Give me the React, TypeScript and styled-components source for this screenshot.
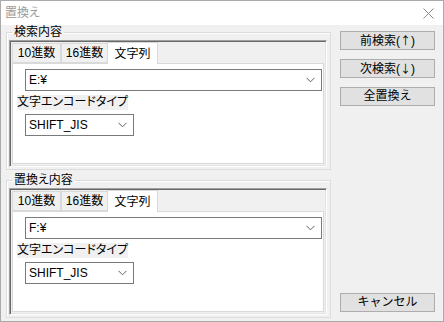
import styled, { createGlobalStyle } from 'styled-components'

const GlobalStyle = createGlobalStyle`
  html, body {
    margin: 0;
    padding: 0;
    background: #ffffff;
  }
  body {
    font-family: "Liberation Sans", "Noto Sans CJK JP", sans-serif;
    font-size: 12px;
    color: #000000;
    font-feature-settings: "palt";
  }
`

const Window = styled.div`
  width: 444px;
  height: 322px;
  box-sizing: border-box;
  border: 1px solid #aaaaaa;
  background: #f0f0f0;
  display: flex;
  flex-direction: column;
`

const TitleBar = styled.div`
  height: 25px;
  background: #ffffff;
  display: flex;
  align-items: center;
  justify-content: space-between;
  padding: 0 9px 0 4px;
`

const Title = styled.div`
  color: #9a9a9a;
  font-size: 12px;
  line-height: 14px;
`

const Body = styled.div`
  flex: 1;
  display: flex;
  gap: 9px;
  padding: 0 8px 3px 5px;
`

const LeftCol = styled.div`
  width: 325px;
  display: flex;
  flex-direction: column;
  gap: 3px;
`

const RightCol = styled.div`
  width: 95px;
  display: flex;
  flex-direction: column;
  gap: 9px;
  padding: 6px 0 6px;
`

const Group = styled.fieldset`
  margin: 0;
  padding: 1px 3px 2px 2px;
  border: 1px solid #dcdcdc;
  box-shadow: inset 1px 1px #ffffff;
  min-width: 0;
`

const Legend = styled.legend`
  margin-left: 3px;
  padding: 0 2px;
  line-height: 14px;
  height: 14px;
  font-size: 12px;
`

const TabFrame = styled.div`
  box-sizing: border-box;
  height: 127px;
  border-top: 1px solid #a0a0a0;
  border-left: 1px solid #a0a0a0;
  border-bottom: 1px solid #ffffff;
  border-right: 1px solid #ffffff;
  box-shadow: inset 1px 1px #696969, inset -1px -1px #e3e3e3;
  padding: 1px 2px 2px 2px;
  display: flex;
  flex-direction: column;
`

const TabStrip = styled.div`
  height: 21px;
  display: flex;
  align-items: flex-end;
  position: relative;
  z-index: 1;
`

const Tab = styled.div<{ $active?: boolean; $w: number }>`
  box-sizing: border-box;
  height: ${p => (p.$active ? '22px' : '20px')};
  margin-bottom: ${p => (p.$active ? '-1px' : '0')};
  margin-left: ${p => (p.$active ? '-1px' : '0')};
  width: ${p => p.$w}px;
  background: ${p => (p.$active ? '#ffffff' : '#f0f0f0')};
  border: 1px solid #d9d9d9;
  border-bottom: ${p => (p.$active ? 'none' : '1px solid #d9d9d9')};
  display: flex;
  align-items: center;
  justify-content: center;
  font-size: 12px;
  line-height: 14px;
  & + & {
    border-left: ${p => (p.$active ? '1px solid #d9d9d9' : 'none')};
  }
`

const TabPage = styled.div`
  flex: 1;
  background: #ffffff;
  border: 1px solid #d9d9d9;
  padding: 5px 0 0 4px;
  display: flex;
  flex-direction: column;
  align-items: flex-start;
`

const Combo = styled.div<{ $w: number }>`
  box-sizing: border-box;
  width: ${p => p.$w}px;
  height: 22px;
  margin-left: 8px;
  background: #ffffff;
  border: 1px solid #7a7a7a;
  display: flex;
  align-items: center;
  justify-content: space-between;
  padding: 0 6px 0 3px;
  font-size: 12px;
`

const FieldLabel = styled.div`
  margin-top: 4px;
  height: 15px;
  line-height: 15px;
  background: #f0f0f0;
  font-size: 12px;
  & + ${Combo} {
    margin-top: 4px;
  }
`

const Button = styled.button<{ $bottom?: boolean }>`
  box-sizing: border-box;
  width: 95px;
  height: 19px;
  margin: 0;
  margin-top: ${p => (p.$bottom ? 'auto' : '0')};
  padding: 0;
  background: #e1e1e1;
  border: 1px solid #adadad;
  font-family: inherit;
  font-size: 12px;
  line-height: 15px;
  color: #000000;
`

const Arrow = styled.span`
  font-family: "Noto Sans CJK JP", sans-serif;
  font-size: 11px;
`

const Chevron = () => (
  <svg width="9" height="6" viewBox="0 0 9 6">
    <path d="M0.5 0.8 L4.5 4.8 L8.5 0.8" fill="none" stroke="#606060" strokeWidth="1" />
  </svg>
)

const CloseIcon = () => (
  <svg width="11" height="11" viewBox="0 0 11 11">
    <path d="M0.5 0.5 L10.5 10.5 M10.5 0.5 L0.5 10.5" fill="none" stroke="#8a8a8a" strokeWidth="1" />
  </svg>
)

const SearchGroup = ({ title, value }: { title: string; value: string }) => (
  <Group>
    <Legend>{title}</Legend>
    <TabFrame>
      <TabStrip>
        <Tab $w={49}>10進数</Tab>
        <Tab $w={47}>16進数</Tab>
        <Tab $w={51} $active>文字列</Tab>
      </TabStrip>
      <TabPage>
        <Combo $w={297}>
          <span>{value}</span>
          <Chevron />
        </Combo>
        <FieldLabel>文字エンコードタイプ</FieldLabel>
        <Combo $w={109}>
          <span>SHIFT_JIS</span>
          <Chevron />
        </Combo>
      </TabPage>
    </TabFrame>
  </Group>
)

const App = () => (
  <>
    <GlobalStyle />
    <Window>
      <TitleBar>
        <Title>置換え</Title>
        <CloseIcon />
      </TitleBar>
      <Body>
        <LeftCol>
          <SearchGroup title="検索内容" value="E:¥" />
          <SearchGroup title="置換え内容" value="F:¥" />
        </LeftCol>
        <RightCol>
          <Button>前検索(<Arrow>↑</Arrow>)</Button>
          <Button>次検索(<Arrow>↓</Arrow>)</Button>
          <Button>全置換え</Button>
          <Button $bottom>キャンセル</Button>
        </RightCol>
      </Body>
    </Window>
  </>
)

export default App
